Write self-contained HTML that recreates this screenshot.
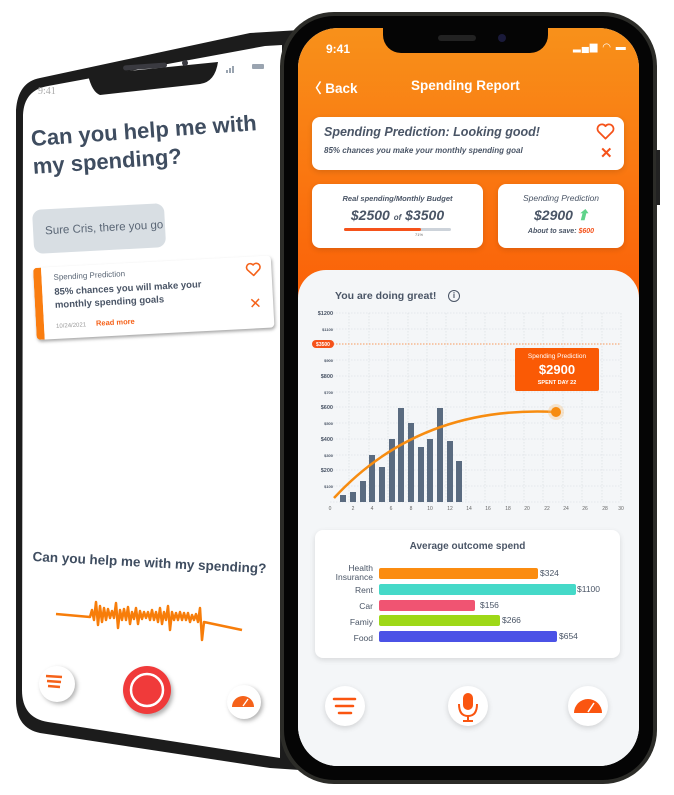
<!DOCTYPE html>
<html><head><meta charset="utf-8"><style>
*{margin:0;padding:0;box-sizing:border-box}
body{width:674px;height:795px;background:#fff;position:relative;overflow:hidden;font-family:"Liberation Sans",sans-serif}
.a{position:absolute}
.card{position:absolute;background:#fff;border-radius:8px;box-shadow:0 2px 6px rgba(0,0,0,.12)}
.t{color:#4a5566}
.btn{position:absolute;width:40px;height:40px;border-radius:50%;background:#fff;box-shadow:0 2px 6px rgba(0,0,0,.15)}
</style></head><body>

<svg class="a" style="left:0;top:0" width="674" height="795">
  <path d="M40,78 Q18,82 16,110 L16,700 Q16,728 40,733 L270,768 L300,770 L300,30 L250,33 Z" fill="#1c1c1c"/>
  <path d="M48,86 Q24,90 23,115 L22,690 Q22,718 48,722 L280,758 L282,45 L265,46 Z" fill="#fff"/>
  <path d="M88,75 L218,62 Q215,82 200,84 L100,95 Q92,92 88,75 Z" fill="#1c1c1c"/>
  <rect x="123" y="64" width="44" height="5" rx="2.5" fill="#3a3a40" transform="rotate(-4 145 66)"/>
  <circle cx="185" cy="63" r="3" fill="#3a3a40"/>
  <text x="38" y="94" font-family="Liberation Serif" font-size="10" fill="#aaa">9:41</text>
  <g fill="#9aa4b0"><rect x="226" y="70" width="2" height="3"/><rect x="229" y="68" width="2" height="5"/><rect x="232" y="66" width="2" height="7"/><rect x="252" y="64" width="12" height="5" rx="1"/></g>
  <path d="M56,614 L90,617 L92,610 L94,620 L96,602 L98,625 L100,606 L102,622 L104,608 L106,620 L108,609 L110,618 L112,611 L114,618 L116,603 L118,628 L120,610 L122,620 L124,609 L126,620 L128,607 L130,624 L132,612 L134,619 L136,608 L138,624 L140,611 L142,619 L144,612 L146,618 L148,612 L150,620 L152,610 L154,620 L156,612 L158,622 L160,608 L162,624 L164,612 L166,620 L168,606 L170,630 L172,612 L174,620 L176,613 L178,620 L180,612 L182,620 L184,613 L186,620 L188,613 L190,622 L192,615 L194,620 L196,614 L198,622 L200,608 L202,640 L204,622 L242,630" fill="none" stroke="#f77d0a" stroke-width="2.5" stroke-linejoin="round"/>
  <circle cx="57" cy="684" r="18" fill="#fff" style="filter:drop-shadow(2px 2px 2px rgba(0,0,0,.3))"/>
  <g stroke="#f5621a" stroke-width="2.5"><line x1="46" y1="676" x2="62" y2="677"/><line x1="47" y1="681" x2="61" y2="682"/><line x1="48" y1="686" x2="60" y2="687"/></g>
  <circle cx="147" cy="690" r="24" fill="#f03a3a" style="filter:drop-shadow(2px 3px 2px rgba(0,0,0,.3))"/>
  <circle cx="147" cy="690" r="16" fill="#f03a3a" stroke="#fff" stroke-width="2.5"/>
  <circle cx="244" cy="702" r="17" fill="#fff" style="filter:drop-shadow(2px 2px 2px rgba(0,0,0,.3))"/>
  <path d="M232,707 A11,11 0 0 1 254,707 Z" fill="#f5621a"/>
  <line x1="243" y1="706" x2="248" y2="699" stroke="#fff" stroke-width="1.3"/>
  <rect x="280" y="12" width="377" height="772" rx="54" fill="#2c2c28"/>
  <rect x="284" y="16" width="369" height="764" rx="50" fill="#050505"/>
  <rect x="656" y="150" width="4" height="55" fill="#222"/>
</svg>

<div class="a t" style="left:30px;top:125px;font-size:22px;font-weight:bold;line-height:28px;transform:rotate(-4deg);transform-origin:left top;color:#3f4d60">Can you help me with<br>my spending?</div>
<div class="a" style="left:32px;top:210px;width:132px;height:44px;border-radius:9px;background:#d8dee3;transform:rotate(-3deg);transform-origin:left top;font-size:11.5px;color:#5a6675;padding:16px 0 0 12px">Sure Cris, there you go</div>
<div class="a" style="left:33px;top:268px;width:238px;height:72px;background:#fff;border-left:8px solid #fa7d10;border-radius:4px;box-shadow:1px 2px 3px rgba(0,0,0,.35);transform:rotate(-3deg);transform-origin:left top">
  <div class="a" style="left:12px;top:6px;font-size:8px;color:#5a6675">Spending Prediction</div>
  <div class="a" style="left:12px;top:19px;font-size:9.5px;font-weight:bold;color:#4a5566;line-height:13px">85% chances you will make your<br>monthly spending goals</div>
  <div class="a" style="left:12px;top:54px;font-size:6px;color:#999">10/24/2021 &nbsp;&nbsp;&nbsp;&nbsp;&nbsp;<b style="color:#f5621a;font-size:7.5px">Read more</b></div>
  <svg class="a" style="left:204px;top:6px" width="16" height="14" viewBox="0 0 16 14"><path d="M8,13 L2,7 A3.3,3.3 0 0 1 8,2.5 A3.3,3.3 0 0 1 14,7 Z" fill="none" stroke="#f5621a" stroke-width="1.6" stroke-linejoin="round"/></svg>
  <div class="a" style="left:206px;top:38px;font-size:15px;color:#f5621a">✕</div>
</div>
<div class="a" style="left:33px;top:549px;font-size:13.5px;font-weight:bold;color:#3f4d60;transform:rotate(3deg);transform-origin:left top">Can you help me with my spending?</div>

<div class="a" style="left:298px;top:28px;width:341px;height:738px;border-radius:40px;overflow:hidden;background:#f4f6f8">
  <div class="a" style="left:0;top:0;width:341px;height:280px;background:linear-gradient(#f8911a,#fb5f08)"></div>
  <div class="a" style="left:85px;top:-2px;width:165px;height:27px;background:#050505;border-radius:0 0 18px 18px"></div>
  <div class="a" style="left:140px;top:7px;width:38px;height:6px;border-radius:3px;background:#222"></div>
  <div class="a" style="left:200px;top:6px;width:8px;height:8px;border-radius:50%;background:#1a1a3a"></div>
  <div class="a" style="left:28px;top:14px;font-size:12px;font-weight:bold;color:#fff">9:41</div>
  <div class="a" style="left:275px;top:14px;font-size:10px;color:#fff;letter-spacing:1px">▂▄▆ ◠ ▬</div>
  <div class="a" style="left:10px;top:49px;font-size:13.5px;font-weight:bold;color:#fff">〈 Back</div>
  <div class="a" style="left:113px;top:50px;font-size:13.5px;font-weight:bold;color:#fff">Spending Report</div>
  <div class="card" style="left:14px;top:89px;width:312px;height:53px">
    <div class="a t" style="left:12px;top:8px;font-size:12.5px;font-weight:bold;font-style:italic">Spending Prediction: Looking good!</div>
    <div class="a t" style="left:12px;top:29px;font-size:8px;font-weight:bold;font-style:italic">85% chances you make your monthly spending goal</div>
    <svg class="a" style="left:284px;top:6px" width="19" height="17" viewBox="0 0 16 14"><path d="M8,13 L2,7 A3.3,3.3 0 0 1 8,2.5 A3.3,3.3 0 0 1 14,7 Z" fill="none" stroke="#f5521a" stroke-width="1.5" stroke-linejoin="round"/></svg>
    <div class="a" style="left:288px;top:27px;font-size:15px;font-weight:bold;color:#f5521a">✕</div>
  </div>
  <div class="card" style="left:14px;top:156px;width:171px;height:64px">
    <div class="a t" style="left:0;width:171px;text-align:center;top:10px;font-size:7.5px;font-style:italic;font-weight:bold">Real spending/Monthly Budget</div>
    <div class="a t" style="left:0;width:171px;text-align:center;top:23px;font-size:14px;font-style:italic;font-weight:bold">$2500 <span style="font-size:8px">of</span> $3500</div>
    <div class="a" style="left:32px;top:44px;width:107px;height:3px;background:#cdd3da;border-radius:2px"></div>
    <div class="a" style="left:32px;top:44px;width:77px;height:3px;background:#f5521a;border-radius:2px"></div>
    <div class="a" style="left:103px;top:48px;font-size:4px;color:#666">71%</div>
  </div>
  <div class="card" style="left:200px;top:156px;width:126px;height:64px">
    <div class="a t" style="left:0;width:126px;text-align:center;top:9px;font-size:8.5px;font-style:italic">Spending Prediction</div>
    <div class="a t" style="left:36px;top:23px;font-size:14px;font-style:italic;font-weight:bold">$2900 <span style="color:#5fd38a">⬆</span></div>
    <div class="a t" style="left:0;width:126px;text-align:center;top:44px;font-size:7px;font-style:italic;font-weight:bold">About to save: <span style="color:#f5521a">$600</span></div>
  </div>
  <div class="a" style="left:0;top:242px;width:341px;height:520px;background:#f4f6f8;border-radius:28px 28px 0 0"></div>
  <div class="a t" style="left:37px;top:262px;font-size:10.5px;font-weight:bold">You are doing great!</div>
  <div class="a" style="left:150px;top:262px;width:12px;height:12px;border:1.5px solid #4a5566;border-radius:50%;font-size:8px;text-align:center;line-height:9px;color:#4a5566;font-weight:bold">i</div>
  <div class="card" style="left:17px;top:502px;width:305px;height:128px">
    <div class="a t" style="left:0;width:305px;text-align:center;top:11px;font-size:10px;font-weight:bold">Average outcome spend</div>
  </div>
  <div class="btn" style="left:27px;top:658px"></div>
  <div class="btn" style="left:150px;top:658px"></div>
  <div class="btn" style="left:270px;top:658px"></div>
</div>

<svg class="a" style="left:0;top:0" width="674" height="795" font-family="Liberation Sans">
  <g stroke="#d5dae0" stroke-width=".6" stroke-dasharray="1.5,1.5">
    <line x1="330" y1="313" x2="621" y2="313"/><line x1="330" y1="329" x2="621" y2="329"/><line x1="330" y1="360" x2="621" y2="360"/><line x1="330" y1="376" x2="621" y2="376"/><line x1="330" y1="392" x2="621" y2="392"/><line x1="330" y1="407" x2="621" y2="407"/><line x1="330" y1="423" x2="621" y2="423"/><line x1="330" y1="439" x2="621" y2="439"/><line x1="330" y1="455" x2="621" y2="455"/><line x1="330" y1="470" x2="621" y2="470"/><line x1="330" y1="486" x2="621" y2="486"/><line x1="330" y1="502" x2="621" y2="502"/>
    <line x1="349" y1="313" x2="349" y2="502"/><line x1="369" y1="313" x2="369" y2="502"/><line x1="388" y1="313" x2="388" y2="502"/><line x1="408" y1="313" x2="408" y2="502"/><line x1="427" y1="313" x2="427" y2="502"/><line x1="446" y1="313" x2="446" y2="502"/><line x1="466" y1="313" x2="466" y2="502"/><line x1="485" y1="313" x2="485" y2="502"/><line x1="505" y1="313" x2="505" y2="502"/><line x1="524" y1="313" x2="524" y2="502"/><line x1="543" y1="313" x2="543" y2="502"/><line x1="563" y1="313" x2="563" y2="502"/><line x1="582" y1="313" x2="582" y2="502"/><line x1="602" y1="313" x2="602" y2="502"/><line x1="621" y1="313" x2="621" y2="502"/>
  </g>
  <line x1="330" y1="344" x2="621" y2="344" stroke="#f77d2a" stroke-width=".8" stroke-dasharray="1.5,1.5"/>
  <g fill="#4a5566" font-size="5.5" font-weight="bold" text-anchor="end">
    <text x="333" y="315">$1200</text><text x="333" y="331" font-size="4">$1100</text><text x="333" y="362" font-size="4">$900</text><text x="333" y="378">$800</text><text x="333" y="394" font-size="4">$700</text><text x="333" y="409">$600</text><text x="333" y="425" font-size="4">$500</text><text x="333" y="441">$400</text><text x="333" y="457" font-size="4">$300</text><text x="333" y="472">$200</text><text x="333" y="488" font-size="4">$100</text>
  </g>
  <rect x="312" y="340" width="22" height="8" rx="4" fill="#f5521a"/><text x="323" y="346" fill="#fff" font-size="5" font-weight="bold" text-anchor="middle">$3500</text>
  <g fill="#5a6b80">
    <rect x="340" y="495" width="6" height="7"/><rect x="350" y="492" width="6" height="10"/><rect x="360" y="481" width="6" height="21"/><rect x="369" y="455" width="6" height="47"/><rect x="379" y="467" width="6" height="35"/><rect x="389" y="439" width="6" height="63"/><rect x="398" y="408" width="6" height="94"/><rect x="408" y="423" width="6" height="79"/><rect x="418" y="447" width="6" height="55"/><rect x="427" y="439" width="6" height="63"/><rect x="437" y="408" width="6" height="94"/><rect x="447" y="441" width="6" height="61"/><rect x="456" y="461" width="6" height="41"/>
  </g>
  <g fill="#666" font-size="5" text-anchor="middle">
    <text x="330" y="510">0</text><text x="353" y="510">2</text><text x="372" y="510">4</text><text x="391" y="510">6</text><text x="411" y="510">8</text><text x="430" y="510">10</text><text x="450" y="510">12</text><text x="469" y="510">14</text><text x="488" y="510">16</text><text x="508" y="510">18</text><text x="527" y="510">20</text><text x="547" y="510">22</text><text x="566" y="510">24</text><text x="585" y="510">26</text><text x="605" y="510">28</text><text x="621" y="510">30</text>
  </g>
  <path d="M334,498 Q420,405 556,412" fill="none" stroke="#f78c10" stroke-width="2.5"/>
  <circle cx="556" cy="412" r="8" fill="#f7c07a" opacity=".35"/><circle cx="556" cy="412" r="5" fill="#f78c10"/>
  <rect x="515" y="348" width="84" height="43" rx="2" fill="#fa5a05"/>
  <text x="557" y="358" fill="#fff" font-size="6.5" text-anchor="middle">Spending Prediction</text>
  <text x="557" y="374" fill="#fff" font-size="13" font-weight="bold" text-anchor="middle">$2900</text>
  <text x="557" y="384" fill="#fff" font-size="5.5" font-weight="bold" text-anchor="middle">SPENT DAY 22</text>
  <g font-size="8.5" fill="#4a5566">
    <g text-anchor="end"><text x="373" y="571">Health</text><text x="373" y="580">Insurance</text><text x="373" y="593">Rent</text><text x="373" y="609">Car</text><text x="373" y="625">Famiy</text><text x="373" y="641">Food</text></g>
    <rect x="379" y="568" width="159" height="11" rx="2" fill="#fb8c10"/><text x="540" y="576">$324</text>
    <rect x="379" y="584" width="197" height="11" rx="2" fill="#45d9c8"/><text x="577" y="592">$1100</text>
    <rect x="379" y="600" width="96" height="11" rx="2" fill="#f05472"/><text x="480" y="608">$156</text>
    <rect x="379" y="615" width="121" height="11" rx="2" fill="#9ed817"/><text x="502" y="623">$266</text>
    <rect x="379" y="631" width="178" height="11" rx="2" fill="#4b52e6"/><text x="559" y="639">$654</text>
  </g>
  <g stroke="#fa5510" stroke-width="2.5" stroke-linecap="round"><line x1="334" y1="699" x2="355" y2="699"/><line x1="336" y1="706" x2="353" y2="706"/><line x1="339" y1="713" x2="351" y2="713"/></g>
  <rect x="463" y="693" width="10" height="17" rx="5" fill="#fa5510"/>
  <path d="M459,704 Q459,716 468,716 Q477,716 477,704" fill="none" stroke="#fa5510" stroke-width="2"/>
  <line x1="468" y1="716" x2="468" y2="721" stroke="#fa5510" stroke-width="2"/><line x1="463" y1="721" x2="473" y2="721" stroke="#fa5510" stroke-width="2"/>
  <path d="M574,713 A14,14 0 0 1 602,713 Z" fill="#fa5510"/>
  <line x1="588" y1="712" x2="594" y2="703" stroke="#fff" stroke-width="1.5"/>
</svg>
</body></html>
